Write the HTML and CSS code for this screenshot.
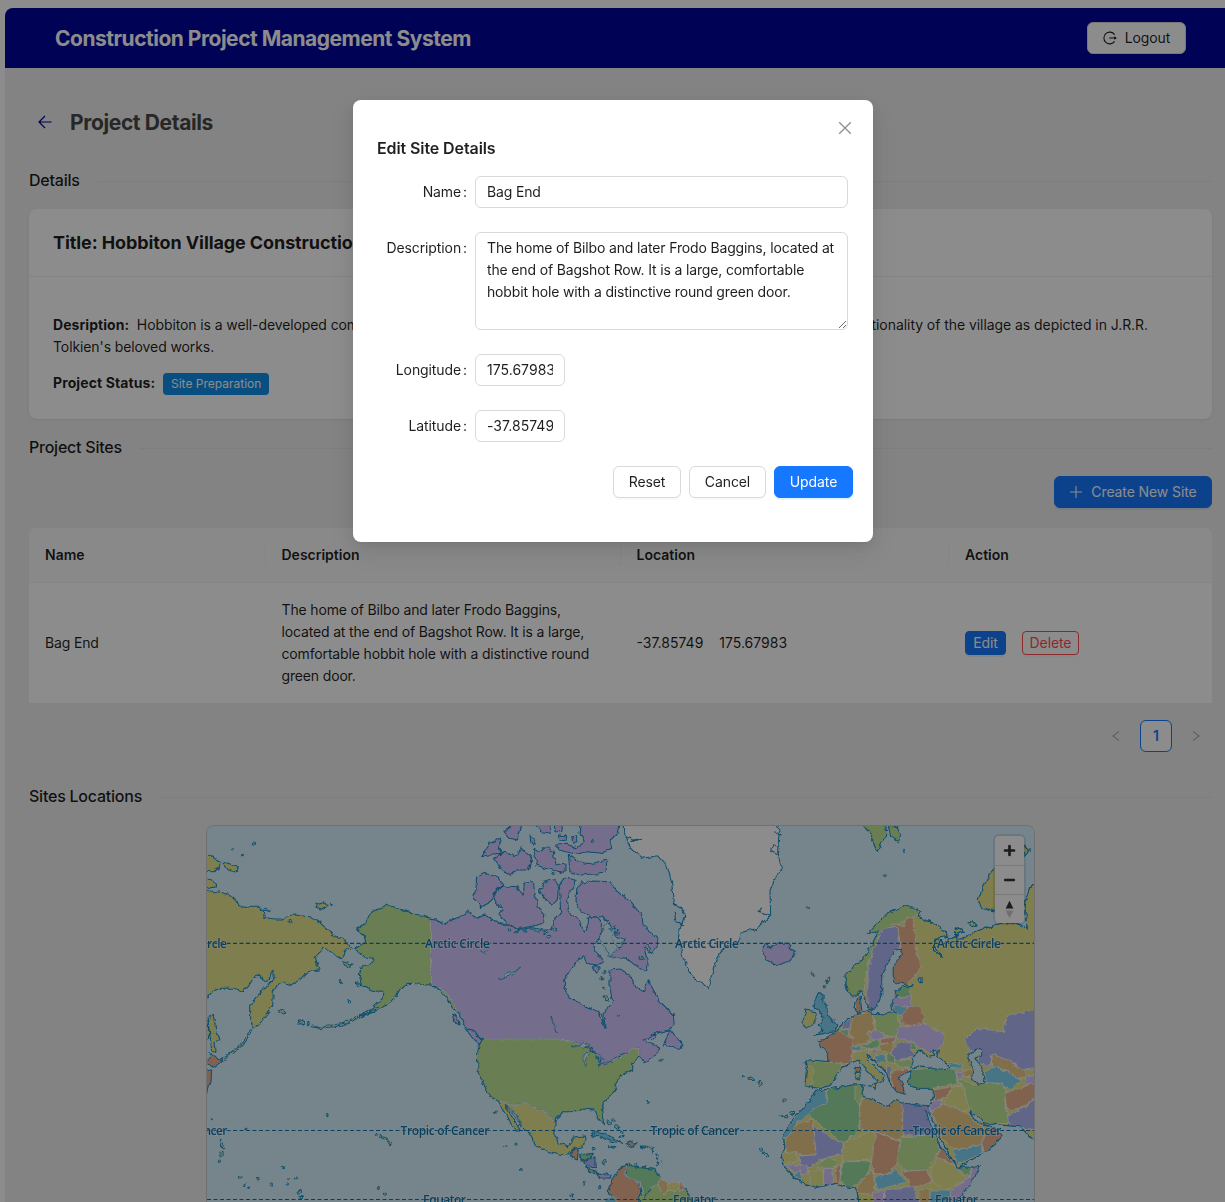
FILE: index.html
```html
<!DOCTYPE html>
<html lang="en">
<head>
<meta charset="utf-8">
<title>Construction Project Management System</title>
<link rel="stylesheet" href="styles.css">
</head>
<body>
<div class="layout">
  <header class="topbar">
    <h1 class="brand">Construction Project Management System</h1>
    <button class="btn logout"><svg class="ico" viewBox="0 0 14 14"><path d="M11.6 3.6A5.9 5.9 0 1 0 11.6 10.4M6.2 7H12.6"/><path class="solid" d="M11.3 5.3L13.9 7L11.3 8.7Z"/></svg>Logout</button>
  </header>
  <main class="content">
    <div class="page-head">
      <svg class="back" viewBox="0 0 14 14"><path d="M13.6 7H1M7 1L1 7L7 13"/></svg>
      <h2>Project Details</h2>
    </div>
    <div class="divider first"><span>Details</span></div>
    <section class="card">
      <h3 class="card-title">Title: Hobbiton Village Construction</h3>
      <div class="card-body">
        <p class="desc-line"><span><b>Desription:</b>&nbsp; Hobbiton is a well-developed community</span><span>functionality of the village as depicted in J.R.R.</span></p>
        <p>Tolkien's beloved works.</p>
        <p class="status"><b>Project Status:</b><span class="tag">Site Preparation</span></p>
      </div>
    </section>
    <div class="divider sites"><span>Project Sites</span></div>
    <div class="actions"><button class="btn primary create"><svg class="ico" viewBox="0 0 14 14"><path d="M7 1V13M1 7H13"/></svg>Create New Site</button></div>
    <div class="table">
      <div class="row thead"><div>Name</div><div>Description</div><div>Location</div><div>Action</div></div>
      <div class="row tbody"><div>Bag End</div><div>The home of Bilbo and later Frodo Baggins,<br>located at the end of Bagshot Row. It is a large,<br>comfortable hobbit hole with a distinctive round<br>green door.</div><div class="loc"><span>-37.85749</span><span>175.67983</span></div><div class="acts"><button class="btn small primary">Edit</button><button class="btn small danger">Delete</button></div></div>
    </div>
    <nav class="pager">
      <svg viewBox="0 0 12 12"><path d="M9 1.5L2.8 6L9 10.5"/></svg>
      <span class="page">1</span>
      <svg viewBox="0 0 12 12"><path d="M3 1.5L9.2 6L3 10.5"/></svg>
    </nav>
    <div class="divider locations"><span>Sites Locations</span></div>
    <div class="map">
<svg class="world" viewBox="207 826 827 376" width="827" height="376">
<defs>
<filter id="rough" filterUnits="userSpaceOnUse" x="190" y="810" width="860" height="410" color-interpolation-filters="sRGB"><feTurbulence type="fractalNoise" baseFrequency=".17" numOctaves="2" seed="4"/><feDisplacementMap in="SourceGraphic" scale="5" xChannelSelector="R" yChannelSelector="G"/></filter>
<path id="eurasia" d="M225,-15L230,25 245,50 275,35 285,60 300,90 320,80 335,45 335,-15 352,-48 375,-90 398,-92 390,-65 370,-40 370,5 400,12 430,15 400,20 372,35 385,50 365,60 368,90 380,98 340,102 305,100 290,90 278,98 265,100 252,85 258,60 270,48 275,90 255,108 230,118 205,145 195,160 180,165 170,178 145,182 148,192 170,215 175,245 120,240 105,245 110,265 105,315 130,322 150,325 185,315 195,290 215,262 235,255 245,248 265,240 285,265 310,290 325,300 318,315 335,305 342,285 320,265 300,250 290,225 320,245 350,280 360,310 380,335 405,342 395,310 388,290 410,278 425,272 418,290 415,310 435,325 465,325 490,325 490,350 480,377 440,375 400,370 380,362 350,380 320,365 285,352 275,340 282,315 250,315 190,325 150,332 135,335 120,360 100,385 75,410 55,440 40,470 45,500 35,530 40,560 70,590 100,610 140,622 200,610 230,620 260,625 268,680 540,680 570,650 610,600 628,560 590,562 560,562 545,540 510,500 500,470 485,440 465,390 484,410 500,450 525,500 550,545 560,565 590,548 640,520 680,490 695,465 670,440 640,435 612,415 600,395 622,405 645,432 665,430 690,435 750,440 780,470 800,482 800,-290 780,-280 768,-245 765,-205 772,-155 740,-170 700,-172 660,-160 630,-150 590,-130 558,-120 556,-160 580,-145 540,-125 528,-105 500,-125 490,-105 520,-65 490,-90 495,-125 535,-130 520,-150 480,-175 445,-190 455,-205 430,-218 400,-223 350,-198 310,-155 295,-140 325,-145 300,-95 280,-65 240,-30Z"/>
<clipPath id="landclip"><use href="#eurasia"/></clipPath>
<path id="isles" d="M95,102h0M160,87h0M127,122h0M397,268h0M195,283h4M207,287h0M270,320h4M421,500h0M445,557v4M240,587l14,8M298,621l10,4M325,626h0M340,633l8,2M355,636l8,4M375,635l12,-2M395,633l14,-2M418,628l12,-2M437,624l12,-5M456,616l12,-6M475,606l12,-5M492,596l14,-6M515,588l16,-8M150,648l-4,10M140,670l-8,10M125,687l-6,7M112,702l-12,8M90,715l-8,6M75,728l-8,6M381,902h0M37,914h0M138,940h0M530,960h0M545,965l12,5M566,980l5,5M61,975v3M68,990v8M66,1012v8M59,1035v3M118,1089h2M135,1108h0M145,1120h0M174,1094h0M214,1107h0M247,1057h0M263,1091h0M286,1092h0M262,1107h0M298,1130v4M303,1148h4M535,1120h0M553,1137h0M886,894h0M916,994h0M948,987h0M964,1063h0M1153,1105h0M1199,1118h0M1180,957h0M1180,1000h0M1115,1140h0M1342,860h0M1383,735h0M1387,1040h0M1370,1020v10M1372,1045v4M1360,1004v5M1345,996h5M1290,1045h0M1305,1050h5M1330,1055h6M1225,920l6,5M1245,933l8,6M1262,948l6,3M1265,965h6M1238,915h4M1630,785h0M1650,793h10M1678,803l4,8M1752,855h4M1742,901h4M1757,905h3M1775,898l6,-5M1682,1005h3M1690,1015h6M1700,1023h0M1215,470h0M1210,520h0M1205,488v4M1215,545l8,10M1205,600v12M1208,615v8M1255,600h0M1210,1045l5,-5M2055,180h0M2110,105v4M1822,279h3M1836,472l2,5M1882,500l4,-8M1873,515h0M2165,495h0M925,345h4M945,350h6M975,345h0M1010,345h8M1035,352h6M1058,345h6M1225,320v6M1240,335h4M1252,350v4M1230,345h3M1060,175h0M1085,175h0M1045,365h4M1340,395l8,12M1320,425l6,8M1175,80l4,-4"/>
</defs>
<rect class="sea" x="200" y="820" width="840" height="390"/>
<g filter="url(#rough)">
<g class="coast" transform="translate(200 815) scale(.33333)">
<g class="y">
<path d="M10,225L60,232 95,240 108,258 126,280 150,274 178,274 190,285 192,308 228,312 250,312 260,303 285,300 328,305 358,322 385,345 405,366 435,375 457,403 438,405 425,433 405,420 385,405 368,398 365,410 345,428 358,465 330,468 305,490 275,510 250,503 232,510 220,530 218,570 200,600 175,630 160,643 152,610 152,575 165,550 190,525 205,505 222,490 222,465 212,485 195,500 180,478 160,488 145,515 125,528 100,520 65,520 40,527 20,550 0,560Z"/>
<path d="M10,125L30,120 60,140 58,160 40,170 10,168ZM68,142L85,145 115,158 105,172 85,165ZM10,185L35,192 52,215 30,218 10,210ZM348,280L352,265 370,260 385,273 365,285ZM22,610L40,598 48,650 60,675 45,680 48,710 35,705 30,660ZM10,610L25,620 26,670 10,680Z"/></g>
<path class="r" d="M30,715L65,740 40,757 20,745ZM10,760L35,765 33,800 20,835 5,840Z"/>
<g class="g"><path d="M692,310L660,300 640,298 610,285 585,278 560,268 545,280 520,288 508,298 498,325 470,342 492,360 497,380 465,402 490,425 520,430 515,445 485,455 478,480 485,510 515,525 552,533 548,550 520,575 495,592 440,625 500,600 540,582 570,562 590,540 605,515 630,505 660,508 692,510 730,520 755,545 780,580 790,600 760,585 745,555 720,525 692,510ZM428,440L458,448 450,457 430,450ZM465,505L480,503 482,512 470,513Z"/></g>
</g>
<g class="coast" transform="translate(430 815) scale(.33333)">
<g class="p">
<path d="M2,310L20,312 40,330 65,315 90,305 115,290 140,310 165,300 190,315 215,328 250,328 270,345 300,338 340,345 365,345 375,310 392,290 390,250 388,205 400,188 435,195 430,220 412,240 415,290 445,310 465,355 475,330 475,308 500,305 515,320 510,370 490,390 500,415 520,440 500,450 470,445 462,425 440,440 425,462 405,490 402,520 420,550 450,565 480,580 507,590 515,620 525,640 522,600 530,580 548,560 540,520 540,465 570,462 600,480 615,515 640,530 655,495 685,555 730,600 733,630 715,645 665,660 640,675 690,700 680,718 645,740 630,725 625,700 600,710 575,718 540,738 500,760 510,735 490,705 460,690 420,678 395,672 160,672 130,655 100,625 85,590 65,555 35,520 2,505Z"/>
<path d="M440,225L455,200 490,198 540,200 560,225 600,260 635,300 640,330 680,370 685,390 665,415 640,395 655,440 650,470 620,455 590,430 540,425 545,405 575,395 585,370 560,365 545,335 520,305 480,305 450,290 438,260Z"/>
<path d="M190,235L215,212 260,215 280,240 283,205 310,200 315,240 325,275 345,300 340,325 300,335 260,342 230,322 205,295 220,285 195,260ZM140,185L165,175 200,185 222,210 195,235 175,265 155,275 130,250 138,220ZM328,230L345,200 375,190 385,215 383,250 365,270 345,250Z"/>
<path d="M455,20L570,20 560,60 540,75 545,100 515,115 470,110 440,118 415,112 385,105 380,90 410,88 440,98 465,80 450,55ZM415,118L445,140 490,148 530,135 528,175 450,180 420,170ZM155,125L180,85 215,70 205,100 215,115 185,118ZM190,130L225,108 255,128 275,98 305,130 295,165 260,165 240,182 215,165ZM310,100L330,108 345,95 370,110 375,150 405,145 405,172 380,168 345,160 320,150ZM222,50L250,30 275,30 262,75 240,70ZM310,20L365,20 360,55 335,50ZM372,20L398,20 392,50 375,50ZM385,60L410,62 408,77 390,75ZM425,65L440,62 440,80 428,82ZM300,60L315,75 312,88 302,80Z"/>
<path d="M700,690L720,645 735,665 755,680 755,700 735,698ZM660,660L680,662 675,672 650,670ZM65,595L78,600 88,630 75,622ZM105,640L130,650 155,672 158,690 130,672ZM488,460L500,452 508,462 495,472Z"/>
</g>
<g class="w"><path d="M582,20L585,65 600,95 635,130 685,122 710,150 725,200 730,265 750,275 765,300 750,340 745,370 760,430 790,490 835,515 860,430 880,400 925,380 930,355 980,340 1022,300 1020,230 1030,195 1055,165 1045,120 1050,60 1040,20Z"/><path class="nofill" d="M585,65L610,75 635,70 600,82M730,265L765,290 760,330 738,320 732,290M1045,120L1025,110 1030,90 1050,95M1030,50L1055,60M1020,300L985,290 995,275"/></g>
<path class="p" d="M995,405L1005,388 1025,398 1045,385 1070,385 1093,410 1085,435 1040,452 1010,435Z"/>
<path class="g" d="M158,672L395,672 420,678 460,692 500,720 508,757 540,738 580,722 610,700 628,700 630,725 605,745 605,765 575,780 555,810 560,825 520,865 515,885 522,930 505,910 495,885 455,882 430,890 395,890 375,920 340,885 310,880 290,865 240,870 205,858 180,845 145,775 142,720 148,690Z"/>
<path class="y" d="M205,858L240,870 290,865 310,880 340,885 375,920 375,960 385,985 415,992 435,965 467,963 460,995 430,1000 415,1020 380,1018 320,995 300,960 270,930 245,885 226,872 270,945 255,945 230,905Z"/>
<path class="r" d="M430,1002L445,1002 442,1035 418,1025Z"/><path class="e" d="M448,1020L490,1015 480,1030 455,1035Z"/><path class="b" d="M460,1038L495,1025 495,1058 475,1055Z"/><path class="g" d="M470,1058L495,1068 500,1078 480,1072Z"/><path class="p" d="M498,1075L520,1080 545,1078 540,1090 510,1088Z"/>
<path class="c" d="M480,962L500,950 530,955 555,972 575,985 540,978 510,965Z"/><path class="r" d="M585,985L600,978 620,988 605,998Z"/><path class="y" d="M535,992L558,995 550,1000ZM628,993L648,993 645,1000Z"/>
<path class="g" d="M610,1170L632,1125 660,1120 690,1100 745,1115 765,1120 790,1170Z"/>
<path class="r" d="M535,1130L548,1090 575,1055 590,1050 585,1085 630,1100 635,1125 625,1170 560,1170Z"/>
<path class="e" d="M590,1050L630,1058 670,1062 690,1085 685,1105 660,1120 645,1145 632,1135 630,1100 588,1085Z"/>
<g class="inner"><path class="o" d="M688,1085L710,1100 718,1120 700,1140 685,1115Z"/><path class="y" d="M715,1102L745,1102 742,1130 712,1130Z"/><path class="r" d="M745,1102L765,1118 748,1130Z"/>
<path class="c" d="M515,1170L530,1145 560,1150 562,1170Z"/></g>
<path class="border" d="M2,313V505L35,520 65,555 85,590M162,672H395L420,678 458,692M508,757L540,738 580,722 610,700 627,700 630,723M208,859L240,870 290,865 310,880 340,885 373,918M588,1056L585,1085 630,1100 635,1125 645,1145M660,1120L685,1105 688,1087"/>
<g class="lake"><path d="M205,490L225,488 220,478 245,470 272,460 240,480 230,490ZM362,600L372,625 382,650 370,632ZM420,690L450,692 458,678 480,690 460,700ZM465,755L458,735 465,712 480,715 468,730ZM490,712L510,720 520,735 500,722ZM505,750L545,738 530,748ZM155,410L180,395 165,412ZM230,870L240,878 268,915 275,930 250,900Z"/><path d="M515,345L530,325 555,345 545,370 565,400 535,430 530,400 510,385Z"/></g>
</g>
<g transform="translate(770 980) scale(.33333)">
<g class="coast"><use class="y" href="#eurasia"/>
<path class="y" d="M95,130L108,90 135,95 135,130 110,145ZM680,-345L660,-320 640,-280 625,-240 635,-215 670,-205 690,-230 700,-300ZM762,-405L778,-390 765,-370ZM595,-170L610,-178 618,-165 602,-158ZM295,315L320,312 315,325Z"/><path class="r" d="M255,260L268,258 270,275 258,278Z"/><path class="y" d="M255,278L270,276 270,296 258,300Z"/>
<path class="c" d="M135,60L145,38 160,45 158,65 172,75 170,100 200,135 195,155 135,165 160,150 145,135 160,115 150,90 132,85Z"/>
<path class="g" d="M278,-465L348,-465 350,-435 335,-410 325,-385 305,-415 305,-440ZM355,-460L375,-460 395,-435 385,-415 362,-430Z"/></g>
<g class="lands" clip-path="url(#landclip)">
<path class="g" d="M210,-20L220,55 280,45 295,-50 325,-130 380,-165 430,-190 460,-200 400,-240 290,-150Z"/>
<path class="b" d="M285,80L295,-30 312,-95 340,-155 380,-160 390,-90 340,-20 345,80 300,100Z"/>
<path class="r" d="M365,10L370,-40 395,-85 385,-150 365,-170 400,-160 410,-190 430,-185 440,-85 452,-35 410,15Z"/>
<path class="e" d="M370,20L420,15 422,50 370,50Z"/><path class="p" d="M360,55L420,48 428,80 365,85Z"/><path class="c" d="M368,78L410,78 410,100 380,108Z"/><path class="r" d="M415,80L445,82 465,110 450,140 390,130 395,110Z"/>
<path class="r" d="M252,45L295,45 290,100 258,98Z"/>
<path class="b" d="M220,130L248,112 240,145 215,148Z"/><path class="e" d="M205,150L235,150 235,170 210,160Z"/>
<path class="o" d="M245,108L308,95 312,145 290,160 300,185 250,195 240,155Z"/><path class="g" d="M310,102L385,98 388,150 370,172 318,155Z"/>
<path class="r" d="M135,175L200,150 250,180 245,250 175,255 165,210Z"/><path class="g" d="M100,240L215,250 185,320 100,325Z"/><path class="y" d="M108,262L130,262 125,320 100,320Z"/>
<path class="c" d="M242,200L275,198 265,215 245,212Z"/><path class="y" d="M245,220L300,205 295,235 345,285 325,320 280,270 250,250Z"/><path class="e" d="M270,198L320,178 330,200 300,208Z"/><path class="p" d="M290,158L325,150 350,172 310,180ZM375,172L385,140 460,130 525,165 520,195 480,220 450,205 430,185Z"/>
<path class="r" d="M330,178L370,172 375,185 335,192Z"/><path class="o" d="M325,195L375,185 360,215 330,212Z"/><path class="b" d="M360,215L385,190 420,190 432,230 380,240Z"/><path class="e" d="M415,185L435,190 438,210 425,208ZM348,220L372,225 378,250 355,252Z"/><path class="g" d="M375,240L428,238 420,265 380,262Z"/><path class="c" d="M310,228L345,225 348,248 325,245Z"/><path class="p" d="M300,208L325,208 315,225Z"/><path class="b" d="M350,252L362,265 362,290 350,285Z"/>
<path class="r" d="M360,275L415,265 410,345 375,345Z"/>
<path class="e" d="M412,300L425,270 480,265 555,268 565,310 490,325 415,330Z"/>
<path class="c" d="M535,245L575,255 575,268 540,265Z"/><path class="o" d="M575,272L608,268 605,290 580,290Z"/><path class="p" d="M558,275L580,280 575,298 562,290Z"/>
<path class="b" d="M585,180L620,145 700,155 710,110 805,85 805,265 765,270 725,245 665,225 665,258 625,250 625,210 595,215Z"/>
<path class="o" d="M665,222L700,235 725,245 765,275 770,290 740,295 700,265 668,262Z"/><path class="c" d="M645,275L680,258 720,280 755,300 720,330 690,310 645,308Z"/><path class="g" d="M565,295L610,315 650,310 700,310 710,340 705,385 722,430 650,432 595,385 580,340Z"/>
<path class="r" d="M705,340L765,320 805,300 800,350 750,385 710,390Z"/><path class="b" d="M712,410L750,390 805,350 805,450 725,440Z"/><path class="p" d="M765,290L805,285 805,310 770,315Z"/>
<path class="r" d="M490,330L545,320 530,350 495,365Z"/><path class="y" d="M525,355L550,320 580,318 595,385 580,395 525,372Z"/><path class="p" d="M480,365L515,360 510,385 485,395Z"/>
<path class="o" d="M485,395L520,372 590,398 620,430 640,440 635,495 555,510 520,480Z"/><path class="c" d="M552,512L635,495 635,520 560,555Z"/><path class="r" d="M635,490L665,430 705,470 640,520Z"/>
<path class="c" d="M35,470L75,415 130,335 170,330 172,365 130,395 80,425 70,470Z"/><path class="e" d="M112,402L172,365 172,330 255,310 258,345 270,380 268,450 220,490Z"/><path class="g" d="M255,312L285,315 280,350 268,375 255,355Z"/><path class="o" d="M270,375L285,350 350,382 380,360 400,370 398,485 320,455 270,450Z"/><path class="b" d="M398,370L480,375 500,465 398,465Z"/>
<path class="o" d="M45,480L85,430 130,420 138,525 50,520Z"/><path class="b" d="M132,440L215,490 220,520 150,540 110,565 88,550 88,525 138,525Z"/><path class="y" d="M35,520L75,515 88,545 40,550Z"/><path class="y" d="M220,490L300,455 320,460 305,540 215,545Z"/><path class="r" d="M318,455L390,485 380,550 345,590 315,580 305,540Z"/><path class="g" d="M395,470L500,465 508,510 470,575 400,570 378,540Z"/>
<path class="p" d="M40,555L110,555 115,580 75,580Z"/><path class="c" d="M70,580L90,570 100,595 85,600Z"/><path class="g" d="M140,565L170,530 205,545 190,565Z"/><path class="y" d="M118,575L160,570 160,620 118,620Z"/><path class="p" d="M162,565L188,565 188,615 160,615Z"/><path class="r" d="M195,560L212,555 210,610 200,610Z"/><path class="e" d="M215,545L305,545 290,590 240,625 210,605Z"/><path class="o" d="M262,620L310,565 315,630 345,645 265,640Z"/><path class="c" d="M312,590L350,585 375,568 412,605 320,630Z"/><path class="r" d="M395,575L470,570 485,605 430,625Z"/><path class="r" d="M500,530L515,505 552,555 520,540Z"/><path class="y" d="M480,575L505,535 550,555 590,595 530,630 490,610Z"/><path class="e" d="M555,562L605,562 600,590Z"/><path class="p" d="M540,635L600,590 610,558 640,555 560,670 535,660Z"/><path class="c" d="M480,630L540,630 535,680 480,680Z"/><path class="b" d="M345,630L430,618 450,680 340,680Z"/><path class="o" d="M445,630L480,628 478,680 450,670Z"/><path class="p" d="M310,640L345,630 340,680 305,680Z"/>
</g>
<use class="outline" href="#eurasia"/>
<g class="lake2"><path d="M425,260L432,225 450,210 470,230 495,225 485,212 505,210 500,228 525,245 540,265 500,268 455,258 430,268ZM590,230L610,212 635,208 635,225 615,235 635,265 645,310 625,315 605,290 610,265ZM445,-8L460,-5 455,5 445,2Z"/></g>
</g>
<g transform="translate(200 815) scale(.33333)"><use class="isle-edge" href="#isles"/><use class="isle-fill" href="#isles"/></g>
</g>
<g class="lines"><path class="arctic" d="M207,943.3H1034"/><path d="M207,1130.5H1034M207,1199.5H1034"/></g>
<g class="geo">
<text x="207" y="947.5" textLength="20">rcle</text><text x="425" y="947.5" textLength="65">Arctic Circle</text><text x="675" y="947.5" textLength="64">Arctic Circle</text><text x="937" y="947.5" textLength="64">Arctic Circle</text>
<text x="203.5" y="1135" textLength="24">ncer</text><text x="400.5" y="1135" textLength="89">Tropic of Cancer</text><text x="650.5" y="1135" textLength="89">Tropic of Cancer</text><text x="912.5" y="1135" textLength="89">Tropic of Cancer</text>
<text x="423" y="1203.5" textLength="43">Equator</text><text x="673" y="1203.5" textLength="43">Equator</text><text x="935" y="1203.5" textLength="43">Equator</text>
</g>
</svg>
      <div class="zoomer">
        <svg viewBox="0 0 29 29"><path class="thick" d="M14.5 10V19M10 14.5H19"/></svg>
        <svg viewBox="0 0 29 29"><path class="thick" d="M10 14.5H19"/></svg>
        <svg viewBox="0 0 29 29"><path class="north" d="M10.5 14L14.5 6L18.5 14Z"/><path class="south" d="M10.5 16L14.5 24L18.5 16Z"/></svg>
      </div>
    </div>
  </main>
</div>
<div class="mask">
  <form class="modal">
    <svg class="close" viewBox="0 0 14 14"><path d="M1.2 1.2L12.8 12.8M12.8 1.2L1.2 12.8"/></svg>
    <h4>Edit Site Details</h4>
    <div class="field"><label>Name<i>:</i></label><input class="control" value="Bag End"></div>
    <div class="field"><label>Description<i>:</i></label><textarea class="control area">The home of Bilbo and later Frodo Baggins, located at the end of Bagshot Row. It is a large, comfortable hobbit hole with a distinctive round green door.</textarea></div>
    <div class="field"><label>Longitude<i>:</i></label><input class="control num" value="175.67983"></div>
    <div class="field"><label>Latitude<i>:</i></label><input class="control num" value="-37.85749"></div>
    <div class="foot"><button type="button" class="btn w68">Reset</button><button type="button" class="btn w77">Cancel</button><button type="button" class="btn primary w79">Update</button></div>
  </form>
</div>
</body>
</html>
```
FILE: styles.css
```css
* { box-sizing: border-box; }
html, body { height: 100%; }
body { margin: 0; padding: 8px 0 0 5px; height: 1202px; overflow: hidden; background: #fff; font: 14px/22px Inter, "Liberation Sans", sans-serif; letter-spacing: -.1px; color: rgba(0,0,0,.88); }
h1, h2, h3, h4, p { margin: 0; }
b { font-weight: 700; letter-spacing: .05px; }
button, input, textarea { font: inherit; letter-spacing: inherit; color: inherit; }
svg { display: block; flex: none; }

.layout { height: 1194px; overflow: hidden; background: #eee; border-radius: 8px 0 0 0; }
.topbar { height: 60px; padding: 0 39px 0 50px; display: flex; align-items: center; justify-content: space-between; background: #00049c; }
.brand { padding-top: 2px; color: #fff; font-size: 21px; font-weight: 700; letter-spacing: -.49px; white-space: nowrap; }
.btn { height: 32px; padding: 0; display: flex; align-items: center; justify-content: center; border: 1px solid #d9d9d9; border-radius: 6px; background: #fff; box-shadow: 0 2px 0 rgba(0,0,0,.02); white-space: nowrap; }
.logout { width: 99px; gap: 8px; }
.ico { width: 14px; height: 14px; fill: none; stroke: currentColor; stroke-width: 1.1; }
.solid { fill: currentColor; stroke: none; }
.primary { background: #1677ff; border-color: #1677ff; color: #fff; box-shadow: 0 2px 0 rgba(5,145,255,.1); }

.content { padding: 38px 13px 0 24px; }
.page-head { display: flex; align-items: center; gap: 18px; height: 32px; padding-left: 9px; }
.page-head h2 { padding-top: 2px; font-size: 21px; font-weight: 700; letter-spacing: -.37px; color: #484848; }
.back { width: 14px; height: 14px; fill: none; stroke: #00049c; stroke-width: 1.2; }
.divider { display: flex; align-items: center; gap: 17px; height: 24px; font-size: 16px; line-height: 24px; font-weight: 500; letter-spacing: -.23px; }
.divider::after { content: ""; flex: 1; height: 1px; margin-top: 2px; background: rgba(5,5,5,.04); }
.first { margin-top: 30px; }
.card { margin-top: 17px; height: 210px; border-radius: 8px; background: #fff; box-shadow: 0 1px 2px rgba(0,0,0,.05), 0 1px 6px -1px rgba(0,0,0,.03); }
.card-title { height: 68px; padding: 0 24px; line-height: 67px; font-size: 18px; font-weight: 700; letter-spacing: -.1px; border-bottom: 1px solid #f0f0f0; }
.card-body { padding: 37px 24px 0; }
.desc-line { width: 1095px; display: flex; justify-content: space-between; white-space: nowrap; }
.desc-line span + span { letter-spacing: -.06px; }
.status { display: flex; align-items: center; gap: 8px; height: 22px; margin-top: 14px; }
.status b { margin-top: -1px; letter-spacing: .1px; }
.tag { width: 106px; height: 22px; margin-top: 1px; display: flex; align-items: center; justify-content: center; border-radius: 4px; background: #108ee9; color: #fff; font-size: 12px; letter-spacing: 0; }
.sites { margin-top: 16px; }
.actions { display: flex; justify-content: flex-end; margin-top: 17px; }
.create { width: 158px; gap: 8px; }
.table { margin-top: 20px; border-radius: 8px 8px 0 0; overflow: hidden; background: #fff; }
.row { display: grid; grid-template-columns: 236.5px 355px 328.5px 1fr; align-items: center; }
.row > div { padding: 0 16px; white-space: nowrap; }
.thead { height: 55px; background: #fafafa; border-bottom: 1px solid #f0f0f0; font-weight: 600; letter-spacing: 0; }
.thead > div + div { position: relative; }
.thead > div + div::before { content: ""; position: absolute; left: -1px; top: 0; width: 1px; height: 22px; background: #f0f0f0; }
.tbody { height: 120px; letter-spacing: -.155px; }
.loc, .acts { display: flex; gap: 16px; }
.loc { letter-spacing: 0; }
.small { height: 24px; border-radius: 4px; padding: 0 7px; letter-spacing: -.1px; }
.small.primary { width: 41px; }
.danger { width: 57px; color: #ff4d4f; border-color: #ff4d4f; }
.pager { display: flex; justify-content: flex-end; align-items: center; gap: 18px; height: 32px; margin-top: 17px; padding-right: 10px; }
.pager svg { width: 12px; height: 12px; fill: none; stroke: rgba(0,0,0,.35); stroke-width: 1; }
.page { width: 32px; height: 32px; border: 1px solid #1677ff; border-radius: 6px; background: #fff; color: #1677ff; text-align: center; line-height: 30px; font-weight: 600; }
.locations { margin-top: 32px; }

.map { position: relative; width: 829px; height: 400px; margin: 17px auto 0; border: 1px solid #ccc; border-radius: 8px; overflow: hidden; }
.sea, .lake path, .lake2 path { fill: #d8f2ff; }
.y { fill: #e7e58f; } .g { fill: #c1e599; } .p { fill: #d6c7ff; } .w { fill: #fff; } .r { fill: #eab38f; }
.e { fill: #98dda1; } .b { fill: #b1bbf9; } .c { fill: #83d5f4; } .o { fill: #ebca8a; }
.coast, .lake2 { stroke: #198ec8; stroke-width: 3.2; stroke-linejoin: round; }
.outline { fill: none; stroke: #198ec8; stroke-width: 2.6; stroke-linejoin: round; }
.lands, .inner { stroke: rgba(255,255,255,.8); stroke-width: 2.6; stroke-linejoin: round; }
.border { fill: none; stroke: #f1f1ee; stroke-width: 4; }
.lake { stroke: #198ec8; stroke-width: 2; }
.nofill { fill: none; }
.isle-edge, .isle-fill { fill: none; stroke: #198ec8; stroke-width: 9.5; stroke-linecap: round; }
.isle-fill { stroke: #dcecc8; stroke-width: 4; }
.lines { fill: none; stroke: #1077b0; stroke-width: 1; stroke-dasharray: 4 2.5; }
.arctic { stroke-width: 1.3; }
.geo { font: 600 12px "Open Sans", "Noto Sans", sans-serif; letter-spacing: 0; fill: #1077b0; stroke: rgba(255,255,255,.5); stroke-width: 1.6; paint-order: stroke; }
.zoomer { position: absolute; top: 10px; right: 10px; width: 29px; border-radius: 4px; background: #fff; box-shadow: 0 0 0 2px rgba(0,0,0,.1); }
.zoomer svg { width: 29px; height: 29px; }
.zoomer svg + svg { border-top: 1px solid #ddd; }
.thick { stroke: #333; stroke-width: 2.7; stroke-linecap: round; }
.north { fill: #333; } .south { fill: #ccc; }

.mask { position: fixed; inset: 0; padding-top: 100px; padding-left: 353px; background: rgba(0,0,0,.45); }
.modal { position: relative; width: 520px; height: 442px; padding: 36px 20px 0 24px; border-radius: 8px; background: #fff; box-shadow: 0 6px 16px 0 rgba(0,0,0,.08), 0 3px 6px -4px rgba(0,0,0,.12), 0 9px 28px 8px rgba(0,0,0,.05); }
.close { position: absolute; top: 21px; right: 21px; width: 14px; height: 14px; fill: none; stroke: rgba(0,0,0,.45); stroke-width: 1.3; }
.modal h4 { font-size: 16px; line-height: 24px; font-weight: 600; letter-spacing: -.1px; }
.field { display: flex; margin-bottom: 24px; }
h4 + .field { margin-top: 16px; }
.field label { width: 98px; padding-right: 8px; line-height: 32px; text-align: right; }
.field i { font-style: normal; margin-left: 2px; }
.control { width: 373px; height: 32px; margin: 0; padding: 3px 11px 5px; border: 1px solid #d9d9d9; border-radius: 6px; background: #fff; outline: none; letter-spacing: -.155px; }
.area { height: 98px; padding: 4px 11px; resize: vertical; overflow: hidden; }
.num { width: 90px; letter-spacing: .03px; }
.foot { display: flex; justify-content: flex-end; gap: 8px; }
.w68 { width: 68px; } .w77 { width: 77px; } .w79 { width: 79px; }
```
